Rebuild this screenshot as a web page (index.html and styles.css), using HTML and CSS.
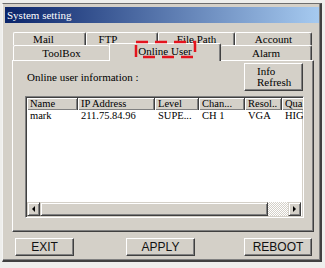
FILE: index.html
```html
<!DOCTYPE html>
<html>
<head>
<meta charset="utf-8">
<link rel="stylesheet" href="styles.css">
</head>
<body>
<div class="win">
  <div class="titlebar">System setting</div>
  <div class="body">
    <div class="tabs">
      <div class="row r1">
        <div class="tab tab-mail">Mail</div>
        <div class="tab tab-ftp">FTP</div>
        <div class="tab tab-path">File Path</div>
        <div class="tab tab-acct">Account</div>
      </div>
      <div class="row r2">
        <div class="tab tab-tool">ToolBox</div>
        <div class="tab tab-online sel">Online User</div>
        <div class="tab tab-alarm">Alarm</div>
      </div>
      <svg class="annot" width="66" height="22" viewBox="0 0 66 22">
        <rect x="3" y="3" width="59" height="15" fill="none" stroke="#e3141e" stroke-width="2.5" stroke-dasharray="12 7"/>
      </svg>
    </div>
    <div class="panel">
      <div class="top">
        <span class="lbl">Online user information :</span>
        <div class="btn info">Info<br>Refresh</div>
      </div>
      <div class="list">
        <div class="hdr">
          <div class="c c1">Name</div>
          <div class="c c2">IP Address</div>
          <div class="c c3">Level</div>
          <div class="c c4">Chan...</div>
          <div class="c c5">Resol..</div>
          <div class="c c6">Quality</div>
        </div>
        <div class="item">
          <div class="c c1">mark</div>
          <div class="c c2">211.75.84.96</div>
          <div class="c c3">SUPE...</div>
          <div class="c c4">CH 1</div>
          <div class="c c5">VGA</div>
          <div class="c c6">HIGH</div>
        </div>
        <div class="hscroll">
          <div class="arr"><span class="tri-l"></span></div>
          <div class="thumb"></div>
          <div class="track"></div>
          <div class="arr"><span class="tri-r"></span></div>
        </div>
      </div>
    </div>
    <div class="actions">
      <div class="btn act exit">EXIT</div>
      <div class="btn act apply">APPLY</div>
      <div class="btn act reboot">REBOOT</div>
    </div>
  </div>
</div>
</body>
</html>
```
FILE: styles.css
```css
html, body {
  margin: 0;
  padding: 0;
  background: #eeeeec;
  width: 325px;
  height: 268px;
  overflow: hidden;
}
body {
  font-family: "Liberation Serif", "DejaVu Serif", serif;
  font-size: 11px;
  color: #000;
}
.win {
  margin: 3px 0 0 2px;
  width: 315px;
  padding: 3px 0 0 2px;
  background: #d4d0c8;
  border-top: 1px solid #6e6e6e;
  border-left: 1px solid #f4f4f4;
  border-right: 2px solid #404040;
  border-bottom: 2px solid #404040;
  box-shadow: inset -1px -1px #808080;
}
.titlebar {
  height: 16px;
  line-height: 16px;
  padding-left: 2px;
  color: #fff;
  background: linear-gradient(to right, #0a246a, #a6caf0);
  font-size: 11px;
  margin-right: 1px;
}
.body {
  padding: 9px 0 4px 7px;
}
.tabs {
  position: relative;
  margin-left: 1px;
  width: 299px;
}
.row {
  display: flex;
  align-items: flex-start;
}
.r1 { height: 13px; }
.r2 { height: 15px; }
.tab {
  box-sizing: border-box;
  background: #d4d0c8;
  border-top: 1px solid #fff;
  border-left: 1px solid #fff;
  border-right: 1px solid #404040;
  box-shadow: inset -1px 0 #808080;
  border-radius: 2px 2px 0 0;
  text-align: center;
  white-space: nowrap;
}
.r1 .tab { height: 13px; line-height: 12px; }
.r2 .tab { height: 15px; line-height: 14px; }
.tab-mail { width: 73px; padding-right: 12px; }
.tab-ftp { width: 72px; padding-right: 28px; }
.tab-path { width: 77px; }
.tab-acct { width: 77px; }
.tab-tool { width: 96px; border-right: none; box-shadow: none; }
.r2 .tab-online {
  width: 112px;
  height: 18px;
  margin-top: -2px;
  line-height: 14px;
  position: relative;
  z-index: 2;
}
.tab-alarm { width: 91px; border-left: none; }
.annot {
  position: absolute;
  left: 120px;
  top: 7px;
  z-index: 3;
}
.panel {
  box-sizing: border-box;
  width: 302px;
  height: 172px;
  padding: 2px 9px 0 12px;
  border: 1px solid;
  border-color: #fff #404040 #404040 #fff;
  box-shadow: inset -1px -1px #808080;
}
.top {
  display: flex;
  align-items: center;
  justify-content: space-between;
  height: 28px;
}
.lbl { margin-left: 2px; }
.btn {
  box-sizing: border-box;
  background: #d4d0c8;
  border: 1px solid;
  border-color: #fff #404040 #404040 #fff;
  box-shadow: inset -1px -1px #808080;
}
.info {
  width: 59px;
  height: 28px;
  margin-right: 1px;
  padding: 2px 0 0 12px;
  line-height: 11px;
}
.list {
  box-sizing: border-box;
  margin-top: 5px;
  height: 122px;
  background: #fff;
  border: 1px solid;
  border-color: #808080 #fff #fff #808080;
  box-shadow: inset 1px 1px #404040, inset -1px -1px #d4d0c8;
  padding: 1px;
  display: flex;
  flex-direction: column;
  overflow: hidden;
  font-size: 10.5px;
}
.hdr, .item {
  display: flex;
  white-space: nowrap;
}
.hdr { height: 12px; line-height: 12px; }
.item { height: 11px; line-height: 11px; }
.c {
  box-sizing: border-box;
  overflow: hidden;
  padding-left: 3px;
  flex: none;
}
.hdr .c {
  background: #d4d0c8;
  box-shadow: inset 1px 1px #fff, inset -1px -1px #808080;
  border-right: 1px solid #404040;
  height: 12px;
}
.c1 { width: 51px; }
.c2 { width: 77px; }
.c3 { width: 44px; }
.c4 { width: 46px; }
.c5 { width: 37px; }
.c6 { width: 30px; }
.hscroll {
  margin-top: auto;
  display: flex;
  height: 14px;
}
.arr {
  box-sizing: border-box;
  width: 13px;
  height: 14px;
  background: #d4d0c8;
  border: 1px solid;
  border-color: #d4d0c8 #404040 #404040 #d4d0c8;
  box-shadow: inset 1px 1px #fff, inset -1px -1px #808080;
  display: flex;
  align-items: center;
  justify-content: center;
}
.tri-l, .tri-r {
  width: 0;
  height: 0;
  border-top: 3px solid transparent;
  border-bottom: 3px solid transparent;
}
.tri-l { border-right: 3px solid #000; }
.tri-r { border-left: 3px solid #000; }
.thumb {
  box-sizing: border-box;
  width: 228px;
  background: #d4d0c8;
  border: 1px solid;
  border-color: #d4d0c8 #404040 #404040 #d4d0c8;
  box-shadow: inset 1px 1px #fff, inset -1px -1px #808080;
}
.track {
  width: 20px;
  background-image: conic-gradient(#d4d0c8 25%, #fff 0 50%, #d4d0c8 0 75%, #fff 0);
  background-size: 2px 2px;
}
.actions {
  display: flex;
  margin-top: 6px;
  height: 18px;
}
.act {
  height: 18px;
  line-height: 16px;
  text-align: center;
  font-family: "Liberation Sans", Arial, sans-serif;
  font-size: 12px;
  color: #111;
}
.exit { width: 59px; margin-left: 3px; }
.apply { width: 69px; margin-left: 52px; }
.reboot { width: 68px; margin-left: 49px; }
```
